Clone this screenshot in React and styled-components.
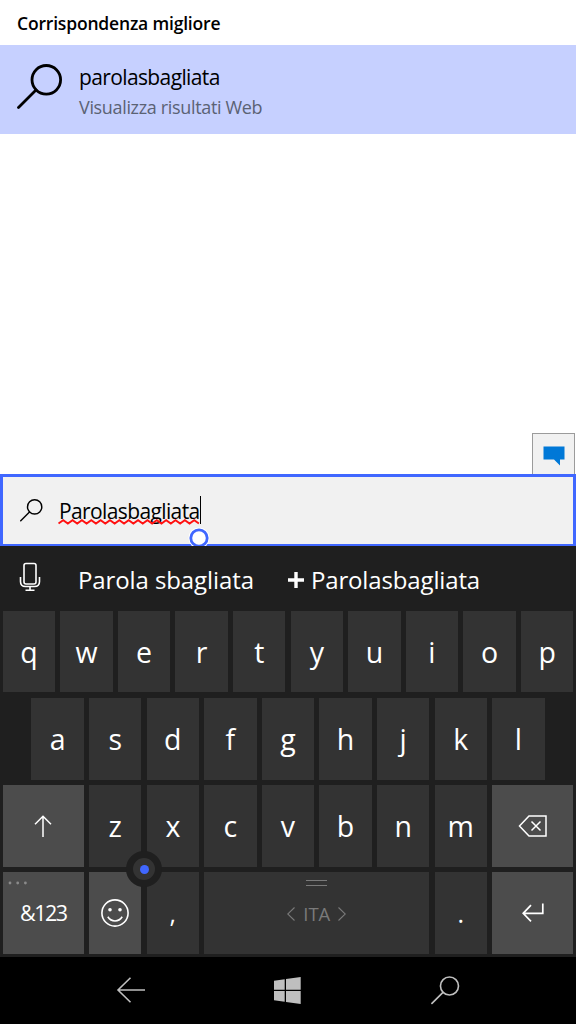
import styled, { createGlobalStyle } from "styled-components";

const GlobalStyle = createGlobalStyle`
  * {
    box-sizing: border-box;
  }
  body {
    margin: 0;
    background: #fff;
    font-family: "Open Sans", "Noto Sans", sans-serif;
  }
`;

const Screen = styled.div`
  width: 576px;
  height: 1024px;
  display: flex;
  flex-direction: column;
  overflow: hidden;
  background: #fff;
`;

const Text = styled.span`
  display: block;
  white-space: nowrap;
  font-size: ${(p) => p.$size}px;
  line-height: ${(p) => p.$line}px;
  letter-spacing: ${(p) => p.$track || 0}px;
  font-weight: ${(p) => p.$weight || 400};
  color: ${(p) => p.$color || "#000"};
`;

const Header = styled.div`
  height: 45px;
  padding: 9px 0 0 17px;
`;

const Result = styled.div`
  height: 89px;
  padding: 19px 0 0 17px;
  display: flex;
  gap: 16px;
  background: #c6d0ff;
`;

const ResultText = styled.div`
  padding-top: 1px;
`;

const Results = styled.div`
  flex: 1;
  display: flex;
  justify-content: flex-end;
  align-items: flex-end;
  padding-right: 1px;
`;

const FeedbackButton = styled.div`
  width: 43px;
  height: 41px;
  border: 1px solid #9b9b9b;
  border-bottom: none;
  background: #f1f1f1;
  display: flex;
  justify-content: center;
  padding-top: 12px;
`;

const SearchBox = styled.div`
  position: relative;
  height: 72px;
  border: 3px solid #4067ff;
  border-bottom-width: 2px;
  background: #f1f1f1;
  display: flex;
  align-items: flex-start;
  padding: 21px 0 0 17px;
`;

const SearchIcon = styled.div`
  display: flex;
  padding-top: 1px;
`;

const Query = styled.div`
  position: relative;
  margin-left: 16px;
`;

const Squiggle = styled.svg`
  position: absolute;
  left: -1px;
  top: 21px;
`;

const Caret = styled.div`
  width: 1.5px;
  height: 28px;
  margin-top: -2px;
  background: #000;
`;

const Handle = styled.svg`
  position: absolute;
  left: 185px;
  top: 50px;
`;

const Keyboard = styled.div`
  position: relative;
  height: 411px;
  background: #1f1f1f;
`;

const Suggestions = styled.div`
  height: 64.8px;
  display: flex;
  align-items: flex-start;
  padding: 16px 0 0 19px;
`;

const Suggestion = styled.div`
  display: flex;
  align-items: center;
  gap: 7px;
  margin-left: ${(p) => p.$gap}px;
`;

const Keys = styled.div`
  display: flex;
  flex-direction: column;
  gap: 5.4px;
`;

const KeyRow = styled.div`
  display: flex;
  justify-content: center;
  gap: 5.2px;
`;

const Key = styled.div`
  position: relative;
  width: ${(p) => p.$width || 52.4}px;
  height: 81.7px;
  display: flex;
  align-items: center;
  justify-content: center;
  background: ${(p) => (p.$special ? "#4c4c4c" : "#333")};
`;

const SpaceLabel = styled.div`
  display: flex;
  align-items: center;
  gap: 8px;
  padding-top: 3px;
`;

const MoreDots = styled.svg`
  position: absolute;
  left: 5px;
  top: 9px;
`;

const Grip = styled.div`
  position: absolute;
  top: 8px;
  left: 102px;
  width: 21px;
  height: 6px;
  border: solid #7a7a7a;
  border-width: 1px 0;
`;

const CursorStick = styled.div`
  position: absolute;
  left: 126px;
  top: 305px;
  width: 36px;
  height: 36px;
  border: 7px solid #1f1f1f;
  border-radius: 50%;
  background: #333;
  display: flex;
  align-items: center;
  justify-content: center;

  &::after {
    content: "";
    width: 9px;
    height: 9px;
    border-radius: 50%;
    background: #4067ff;
  }
`;

const NavBar = styled.div`
  height: 67px;
  display: flex;
  align-items: center;
  padding: 0 0 1px 116px;
  background: #000;
`;

const NavItem = styled.div`
  display: flex;
  margin-right: ${(p) => p.$gap || 0}px;
`;

const Magnifier = ({ size, stroke, color = "#000" }) => (
  <svg width={size} height={size} viewBox="0 0 46 46" fill="none" stroke={color} strokeWidth={stroke} strokeLinecap="round">
    <circle cx="29.3" cy="15.8" r="14.3" />
    <path d="M19 26 L1.5 43.5" />
  </svg>
);

const ChatIcon = () => (
  <svg width="22" height="20" viewBox="0 0 22 20">
    <path d="M0.5 0.5H21.5V13.5H17V19.5L11 13.5H0.5Z" fill="#0078d7" />
  </svg>
);

const MicIcon = () => (
  <svg width="22" height="30" viewBox="0 0 22 30" fill="none" stroke="#fff" strokeWidth="1.6">
    <rect x="5" y="1.5" width="12" height="20.5" rx="2" />
    <path d="M1.5 15V19.5Q1.5 24.5 6.5 24.5H15.5Q20.5 24.5 20.5 19.5V15M11 24.5V28.3M6.5 28.3H15.5" />
  </svg>
);

const PlusIcon = () => (
  <svg width="16" height="16" viewBox="0 0 16 16" stroke="#fff" strokeWidth="3.4">
    <path d="M0 8H16M8 0V16" />
  </svg>
);

const ShiftIcon = () => (
  <svg width="18" height="22" viewBox="0 0 18 22" fill="none" stroke="#fff" strokeWidth="1.5">
    <path d="M9 22V1.5M1 9.3L9 1.3L17 9.3" />
  </svg>
);

const BackspaceIcon = () => (
  <svg width="29" height="22" viewBox="0 0 29 22" fill="none" stroke="#fff" strokeWidth="1.5">
    <path d="M11 1H28V21H11L1.5 11ZM13.5 6.5L22.5 15.5M22.5 6.5L13.5 15.5" />
  </svg>
);

const SmileIcon = () => (
  <svg width="28" height="28" viewBox="0 0 28 28" fill="none" stroke="#fff" strokeWidth="1.6">
    <circle cx="14" cy="14" r="13.1" />
    <path d="M6.8 17.8Q9.5 22 14 22T21.2 17.8" />
    <circle cx="9" cy="10.7" r="1.8" fill="#fff" stroke="none" />
    <circle cx="19" cy="10.7" r="1.8" fill="#fff" stroke="none" />
  </svg>
);

const EnterIcon = () => (
  <svg width="22" height="19" viewBox="0 0 22 19" fill="none" stroke="#fff" strokeWidth="1.7">
    <path d="M20.8 0.5V10.3H1.5M9 2.2L1.2 10.3L9 18.3" />
  </svg>
);

const Chevron = ({ right }) => (
  <svg width="8" height="14" viewBox="0 0 8 14" fill="none" stroke="#7a7a7a" strokeWidth="1.1">
    <path d={right ? "M0.5 0.5L7.3 7L0.5 13.5" : "M7.5 0.5L0.7 7L7.5 13.5"} />
  </svg>
);

const BackIcon = () => (
  <svg width="30" height="26" viewBox="0 0 30 26" fill="none" stroke="#bfbfbf" strokeWidth="1.6">
    <path d="M29 13H2M14.5 0.7L2 13L14.5 25.3" />
  </svg>
);

const WindowsIcon = () => (
  <svg width="27" height="27" viewBox="0 0 27 27" fill="#bfbfbf">
    <path d="M0 3.8L10.7 2.3V12.8H0ZM12 2.1L26.7 0V12.8H12ZM0 14.1H10.7V24.7L0 23.2ZM12 14.1H26.7V27L12 24.9Z" />
  </svg>
);

const Letters = ({ text, size = 28.5, line = 36 }) =>
  text.split("").map((letter) => (
    <Key key={letter}>
      <Text $size={size} $line={line} $color="#fff">{letter}</Text>
    </Key>
  ));

const zigzag = "M0.5 4.5" + Array.from({ length: 30 }, (_, i) => `L${(i + 1) * 4.68 + 0.5} ${i % 2 ? 4.6 : 1.2}`).join("");

const App = () => {
  return (
    <Screen>
      <GlobalStyle />
      <Header>
        <Text $size={17.5} $line={28} $weight={600} $track={-0.18}>Corrispondenza migliore</Text>
      </Header>
      <Result>
        <Magnifier size={46} stroke={2.8} />
        <ResultText>
          <Text $size={21} $line={25} $track={-0.62}>parolasbagliata</Text>
          <Text $size={18} $line={34} $track={-0.34} $color="#5b6274">Visualizza risultati Web</Text>
        </ResultText>
      </Result>
      <Results>
        <FeedbackButton>
          <ChatIcon />
        </FeedbackButton>
      </Results>
      <SearchBox>
        <SearchIcon>
          <Magnifier size={23} stroke={2.9} />
        </SearchIcon>
        <Query>
          <Text $size={21} $line={26} $track={-0.62}>Parolasbagliata</Text>
          <Squiggle width="142" height="6" fill="none" stroke="#f11" strokeWidth="1.8">
            <path d={zigzag} />
          </Squiggle>
        </Query>
        <Caret />
        <Handle width="22" height="22" viewBox="0 0 22 22">
          <circle cx="11" cy="11" r="10.5" fill="#fff" />
          <circle cx="11" cy="11" r="8.2" fill="#fff" stroke="#4067ff" strokeWidth="2.8" />
        </Handle>
      </SearchBox>
      <Keyboard>
        <Suggestions>
          <MicIcon />
          <Suggestion $gap={37}>
            <Text $size={24} $line={36} $track={-0.1} $color="#fff">Parola sbagliata</Text>
          </Suggestion>
          <Suggestion $gap={34}>
            <PlusIcon />
            <Text $size={24} $line={36} $track={-0.14} $color="#fff">Parolasbagliata</Text>
          </Suggestion>
        </Suggestions>
        <Keys>
          <KeyRow>
            <Letters text="qwertyuiop" />
          </KeyRow>
          <KeyRow>
            <Letters text="asdfghjkl" />
          </KeyRow>
          <KeyRow>
            <Key $special $width={81.2}>
              <ShiftIcon />
            </Key>
            <Letters text="zxcvbnm" />
            <Key $special $width={81.2}>
              <BackspaceIcon />
            </Key>
          </KeyRow>
          <KeyRow>
            <Key $special $width={81.2}>
              <MoreDots width="20" height="4" fill="#8a8a8a">
                <circle cx="2" cy="2" r="1.4" />
                <circle cx="9.7" cy="2" r="1.4" />
                <circle cx="17.4" cy="2" r="1.4" />
              </MoreDots>
              <Text $size={21.5} $line={30} $track={-1.5} $color="#fff">&amp;123</Text>
            </Key>
            <Key $special>
              <SmileIcon />
            </Key>
            <Letters text="," size={25} line={40} />
            <Key $width={225.2}>
              <Grip />
              <SpaceLabel>
                <Chevron />
                <Text $size={18.5} $line={26} $color="#7a7a7a">ITA</Text>
                <Chevron right />
              </SpaceLabel>
            </Key>
            <Letters text="." size={25} />
            <Key $special $width={81.2}>
              <EnterIcon />
            </Key>
          </KeyRow>
        </Keys>
        <CursorStick />
      </Keyboard>
      <NavBar>
        <NavItem $gap={128}>
          <BackIcon />
        </NavItem>
        <NavItem $gap={130}>
          <WindowsIcon />
        </NavItem>
        <NavItem>
          <Magnifier size={29} stroke={2.6} color="#bfbfbf" />
        </NavItem>
      </NavBar>
    </Screen>
  );
};

export default App;
